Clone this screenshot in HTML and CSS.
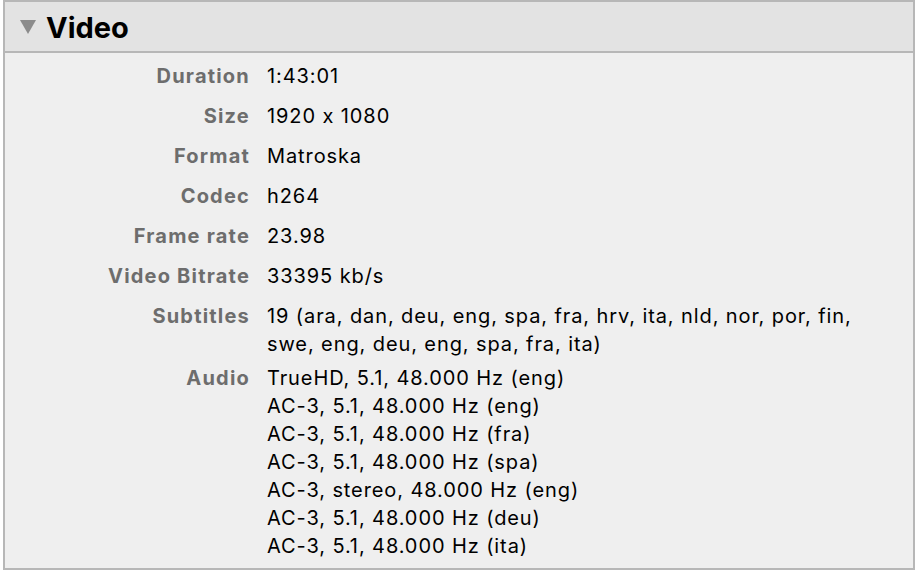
FILE: index.html
```html
<!DOCTYPE html>
<html>
<head>
    <title>Video</title>
    <link rel="stylesheet" href="styles.css">
</head>
<body>
    <div class="panel">
        <div class="panel-header">
            <svg class="disclosure" width="16" height="14" viewBox="0 0 16 14">
                <polygon points="0,0 16,0 8,14" fill="#8b8b8b"/>
            </svg>
            <span class="title">Video</span>
        </div>
        <div class="panel-body">
            <div class="row">
                <div class="label">Duration</div>
                <div class="value">1:43:01</div>
            </div>
            <div class="row">
                <div class="label">Size</div>
                <div class="value">1920 x 1080</div>
            </div>
            <div class="row">
                <div class="label">Format</div>
                <div class="value">Matroska</div>
            </div>
            <div class="row">
                <div class="label">Codec</div>
                <div class="value">h264</div>
            </div>
            <div class="row">
                <div class="label">Frame rate</div>
                <div class="value">23.98</div>
            </div>
            <div class="row">
                <div class="label">Video Bitrate</div>
                <div class="value">33395 kb/s</div>
            </div>
            <div class="row multi">
                <div class="label">Subtitles</div>
                <div class="value">19 (ara, dan, deu, eng, spa, fra, hrv, ita, nld, nor, por, fin, swe, eng, deu, eng, spa, fra, ita)</div>
            </div>
            <div class="row multi">
                <div class="label">Audio</div>
                <div class="value">
                    <div>TrueHD, 5.1, 48.000 Hz (eng)</div>
                    <div>AC-3, 5.1, 48.000 Hz (eng)</div>
                    <div>AC-3, 5.1, 48.000 Hz (fra)</div>
                    <div>AC-3, 5.1, 48.000 Hz (spa)</div>
                    <div>AC-3, stereo, 48.000 Hz (eng)</div>
                    <div>AC-3, 5.1, 48.000 Hz (deu)</div>
                    <div>AC-3, 5.1, 48.000 Hz (ita)</div>
                </div>
            </div>
        </div>
    </div>
</body>
</html>
```

FILE: styles.css
```css
body {
    margin: 0;
    background-color: #fff;
    font-family: Inter, "Liberation Sans", sans-serif;
    font-feature-settings: "calt" 0;
}
.panel {
    width: 908px;
    margin-left: 3px;
    border: 2px solid #b7b7b7;
    background-color: #efefef;
}
.panel-header {
    display: flex;
    align-items: center;
    height: 49px;
    padding-left: 15px;
    background-color: #e3e3e3;
    border-bottom: 2px solid #b7b7b7;
}
.disclosure {
    margin-right: 10px;
}
.title {
    font-size: 29px;
    font-weight: bold;
    color: #000;
    padding-top: 2px;
}
.panel-body {
    padding: 3px 0 8px 0;
}
.row {
    display: flex;
    padding: 6px 0;
    font-size: 20px;
    line-height: 28px;
}
.row.multi {
    padding-bottom: 0;
}
.label {
    width: 245px;
    flex-shrink: 0;
    text-align: right;
    font-weight: bold;
    letter-spacing: 1.2px;
    color: #6d6d6d;
}
.value {
    margin-left: 17px;
    padding-right: 40px;
    letter-spacing: 0.9px;
    color: #000;
}
```
